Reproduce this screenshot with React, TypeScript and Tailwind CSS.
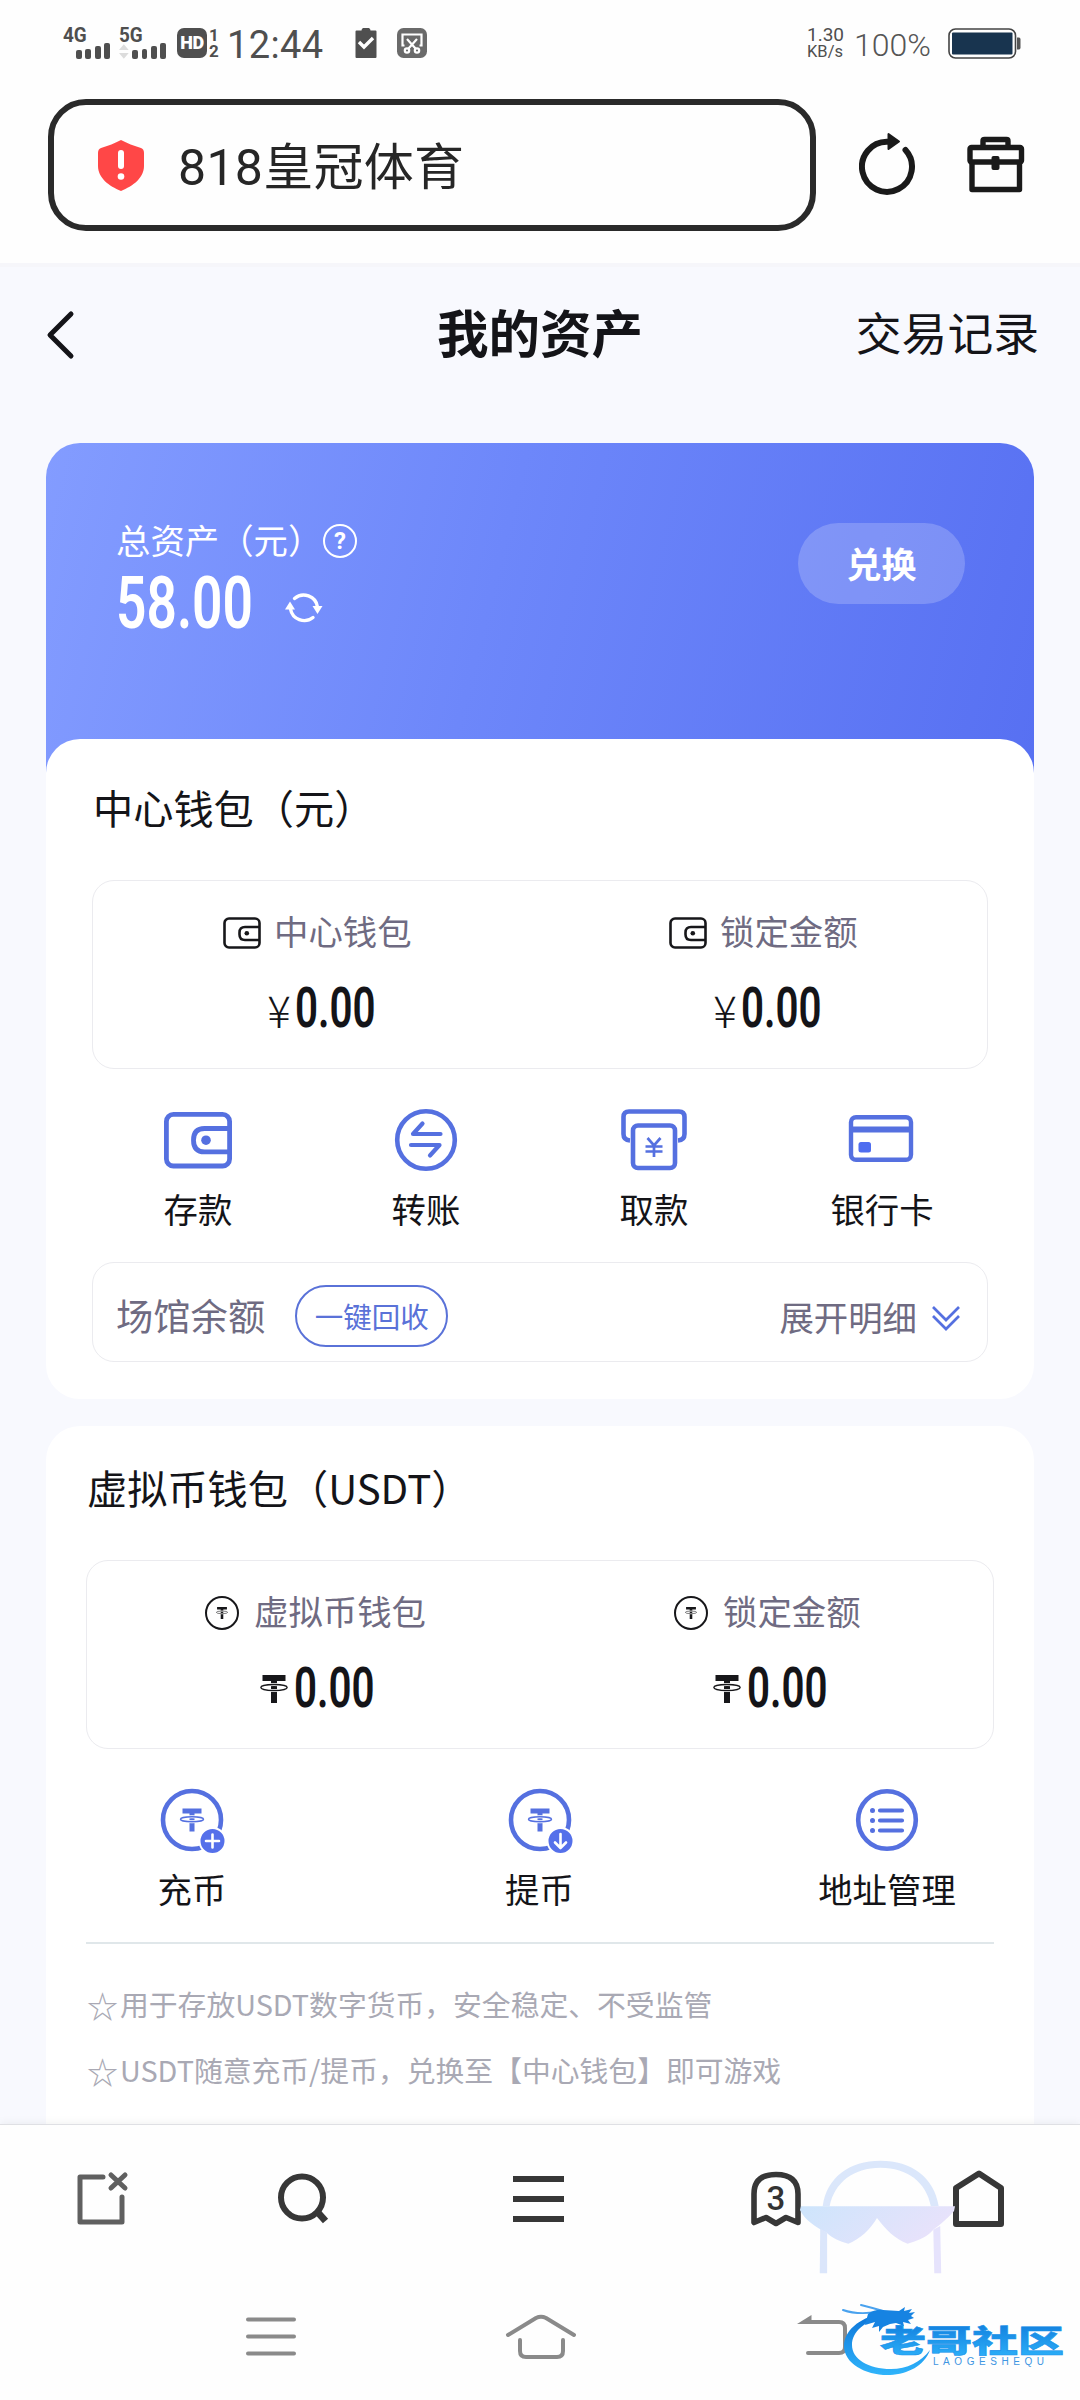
import type { ReactNode } from "react";

// ---------------------------------------------------------------------------
// Assets page — wallet overview inside a mobile browser shell.
// ---------------------------------------------------------------------------

const BLUE = "#5570e0";

function CondensedAmount({ value, size = "md" }: { value: string; size?: "md" | "lg" }) {
  if (size === "lg") {
    return (
      <span className="block h-[53px] w-[136px]">
        <span className="block origin-left scale-x-[0.73] whitespace-nowrap font-['Roboto'] text-[73px] font-semibold leading-[53px]">
          {value}
        </span>
      </span>
    );
  }
  return (
    <span className="block h-[41px] w-[78px]">
      <span className="block origin-left scale-x-[0.72] whitespace-nowrap font-['Roboto'] text-[56px] font-semibold leading-[41px]">
        {value}
      </span>
    </span>
  );
}

/* ------------------------------- status bar ------------------------------ */

function Signal({ label, arrows = false }: { label: string; arrows?: boolean }) {
  return (
    <div className="flex h-[31px] w-[47px] flex-col">
      <span className="block h-[15px] origin-left scale-x-[0.9] text-[21px] font-bold leading-[15px]">
        {label}
      </span>
      <div className="flex h-4 items-end justify-end gap-[3.5px]">
        {arrows && (
          <svg width="10" height="16" viewBox="0 0 10 16" className="mr-auto" fill="#dcdcdc">
            <path d="M5 1l5 6H0zM5 16l5-6H0z" />
          </svg>
        )}
        <i className="h-[9px] w-[6px] rounded-[2px] bg-[#4f4f4f]" />
        <i className="h-[10px] w-[6px] rounded-[2px] bg-[#4f4f4f]" />
        <i className="h-[13px] w-[6px] rounded-[2px] bg-[#4f4f4f]" />
        <i className="h-[16px] w-[6px] rounded-[2px] bg-[#4f4f4f]" />
      </div>
    </div>
  );
}

function StatusBar() {
  return (
    <div className="flex h-[86px] items-center pl-[63px] pr-[59px] font-['Roboto'] text-[#4f4f4f]">
      <Signal label="4G" />
      <div className="ml-[9px]">
        <Signal label="5G" arrows />
      </div>
      <div className="ml-[11px] flex h-[30px] w-[30px] items-center justify-center rounded-[7px] bg-[#4f4f4f]">
        <span className="text-[18px] font-black leading-none tracking-[-0.5px] text-white">HD</span>
      </div>
      <div className="ml-[2px] flex w-[10px] flex-col items-center text-[17px] font-bold leading-[16px]">
        <span>1</span>
        <span>2</span>
      </div>
      <span className="ml-[8px] w-[99px] pt-[4px] text-[38px] leading-none tracking-[0.4px]">12:44</span>
      <svg className="ml-[29px]" width="22" height="30" viewBox="0 0 22 30">
        <path d="M1.500 2.500H6.500a4.500 3 0 0 1 9 0H20.500q1 0 1 1V29q0 1-1 1H1.500q-1 0-1-1V3.500q0-1 1-1z" fill="#4f4f4f" />
        <path d="M4 14l5 5 9-9" fill="none" stroke="#fff" strokeWidth="3.400" />
      </svg>
      <svg className="ml-[20px]" width="30" height="30" viewBox="0 0 30 30">
        <rect width="30" height="30" rx="6.500" fill="#6a6a6a" />
        <g fill="none" stroke="#fff" strokeWidth="2.200">
          <path d="M7.500 17.500H5.500V6.500h19v11h-2" />
          <path d="M10 11l8.500 9.500M20 11l-8.500 9.500" />
          <circle cx="10" cy="22.500" r="2.200" />
          <circle cx="20" cy="22.500" r="2.200" />
        </g>
      </svg>
      <div className="ml-auto flex items-center">
        <div className="flex w-[38px] flex-col whitespace-nowrap text-[16.5px] leading-[17px]">
          <span className="text-[19px]">1.30</span>
          <span>KB/s</span>
        </div>
        <span className="ml-[9px] w-[82px] pt-[4px] text-[32px] font-light leading-none text-[#555]">100%</span>
        <svg className="ml-[12px]" width="73" height="31" viewBox="0 0 73 31">
          <rect x="1" y="1" width="66.500" height="29" rx="6.500" fill="#fff" stroke="#444" strokeWidth="1.600" />
          <rect x="4" y="4.500" width="60.500" height="22" rx="1" fill="#18344f" />
          <path d="M69 9.500h2q1.500 0 1.500 2v8q0 2-1.500 2h-2z" fill="#555" />
        </svg>
      </div>
    </div>
  );
}

/* ------------------------------- address bar ----------------------------- */

function AddressBar() {
  return (
    <div className="mt-[13px] flex h-[132px] items-center pl-12">
      <div className="flex h-[132px] w-[768px] items-center rounded-[38px] border-[6px] border-[#2a2a2a] pl-[43px]">
        <svg width="48" height="52" viewBox="0 0 48 52">
          <path d="M24 1C30 4 37 7 44 9Q47 10 47 14V27C47 39 36 47 24 52C12 47 1 39 1 27V14Q1 10 4 9C11 7 18 4 24 1z" fill="#ff4747" />
          <path d="M24 14v13" stroke="#fff" strokeWidth="6" strokeLinecap="round" />
          <circle cx="24" cy="37.500" r="3.300" fill="#fff" />
        </svg>
        <span className="ml-[33px] pt-[5px] font-['Roboto','Noto_Sans_CJK_SC',sans-serif] text-[50px] leading-none tracking-[0.3px] text-[#262626]">
          818皇冠体育
        </span>
      </div>
      <svg className="ml-[43px]" width="58" height="66" viewBox="0 0 58 66">
        <path d="M46.500 18A25 25 0 1 1 29 9.800" fill="none" stroke="#1a1a1a" strokeWidth="6" strokeLinecap="round" />
        <path d="M29.500 2v15l10.500-7.500z" fill="#1a1a1a" stroke="#1a1a1a" strokeWidth="2" strokeLinejoin="round" />
      </svg>
      <svg className="ml-[49px]" width="60" height="58" viewBox="0 0 60 58">
        <g fill="none" stroke="#1a1a1a" strokeWidth="5.400" strokeLinejoin="round">
          <path d="M17 11V5q0-1.500 1.500-1.500h22q1.500 0 1.500 1.500v6" />
          <rect x="4" y="11.500" width="51.500" height="14.500" rx="1.500" />
          <path d="M6 26v27.500h47.500V26" />
        </g>
        <rect x="25.500" y="20" width="8" height="14" rx="2" fill="#1a1a1a" />
      </svg>
    </div>
  );
}

/* --------------------------------- icons --------------------------------- */

function WalletIcon() {
  return (
    <svg className="mt-[2px]" width="38" height="32" viewBox="0 0 38 32" fill="none" stroke="#17171a" strokeWidth="2.600">
      <rect x="1.500" y="1.500" width="35" height="29" rx="4.500" />
      <path d="M36.500 10H22q-5.500 0-5.500 5.500v2q0 5.500 5.500 5.500h14.500" />
      <circle cx="23.800" cy="16.300" r="2.300" fill="#17171a" stroke="none" />
    </svg>
  );
}

// Tether mark: heavy T with a ring round its stem
function TetherMark({ className, color }: { className: string; color: string }) {
  return (
    <svg className={className} viewBox="0 0 28 28">
      <path d="M2.500 0h23v6H17v22h-6V6H2.500z" fill={color} />
      <ellipse cx="14" cy="12.500" rx="13.200" ry="3" fill="none" stroke="#fff" strokeWidth="3" />
      <ellipse cx="14" cy="12.500" rx="13.200" ry="3" fill="none" stroke={color} strokeWidth="1.300" />
    </svg>
  );
}

function TetherCoinIcon() {
  return (
    <div className="mt-[2px] flex h-[34px] w-[34px] items-center justify-center rounded-full border-[2.500px] border-[#17171a]">
      <TetherMark className="h-[12px] w-[14px]" color="#17171a" />
    </div>
  );
}

function DepositIcon() {
  return (
    <svg width="70" height="64" viewBox="0 0 70 64" fill="none" stroke={BLUE} strokeWidth="4.800">
      <rect x="3.400" y="6.400" width="63.200" height="51.600" rx="7" />
      <path d="M66 20.500H41.500q-11 0-11 11.700t11 11.700H66" />
      <circle cx="43" cy="32.200" r="4.800" fill={BLUE} stroke="none" />
    </svg>
  );
}

function TransferIcon() {
  return (
    <svg width="64" height="64" viewBox="0 0 64 64" fill="none" stroke={BLUE} strokeWidth="4.600">
      <circle cx="32" cy="32" r="28.800" />
      <path d="M46.500 26H19l9.500-10.500M17 37h28.500L36 47.500" strokeWidth="4.200" strokeLinecap="round" strokeLinejoin="round" />
    </svg>
  );
}

function WithdrawIcon() {
  return (
    <svg width="66" height="64" viewBox="0 0 66 64" fill="none" stroke={BLUE} strokeWidth="4.600">
      <path d="M9 32.500Q2.500 32 2.500 26V9q0-5.500 5.500-5.500h50q5.500 0 5.500 5.500v17q0 6-6.500 6.500" />
      <rect x="12" y="17.500" width="42" height="42.500" rx="5" />
      <path d="M26.500 30l6.500 7.500 6.500-7.500M24.500 38.500h17M24.500 43.500h17M33 37v12" strokeWidth="2.700" />
    </svg>
  );
}

function CardIcon() {
  return (
    <svg className="-ml-[3px]" width="66" height="64" viewBox="0 0 66 64" fill="none" stroke={BLUE} strokeWidth="4.400">
      <rect x="3" y="9.200" width="60" height="42.600" rx="5" />
      <path d="M2 21.500h62" strokeWidth="6" />
      <rect x="10.500" y="34" width="12.500" height="10.500" rx="2.500" fill="#4f6df0" stroke="none" />
    </svg>
  );
}

function CoinActionIcon({ children }: { children: ReactNode }) {
  return (
    <svg width="68" height="68" viewBox="0 0 68 68" fill="none">
      <circle cx="34" cy="34" r="29" stroke={BLUE} strokeWidth="4.600" />
      <path d="M24.500 22.500h19v5H36.500v18h-5v-18h-7z" fill={BLUE} />
      <ellipse cx="34" cy="33.200" rx="11.500" ry="2.500" stroke="#fff" strokeWidth="3" />
      <ellipse cx="34" cy="33.200" rx="11.500" ry="2.500" stroke={BLUE} strokeWidth="1.500" />
      <circle cx="54.500" cy="55" r="13" fill="#5570ea" stroke="#fff" strokeWidth="2" />
      <g stroke="#fff" strokeWidth="2.600" strokeLinecap="round" strokeLinejoin="round">
        {children}
      </g>
    </svg>
  );
}

function AddressIcon() {
  return (
    <svg width="68" height="68" viewBox="0 0 68 68" fill="none" stroke={BLUE}>
      <circle cx="34" cy="34" r="28.800" strokeWidth="4.600" />
      <path d="M27 24.500h22M27 34.500h22M27 44.500h22" strokeWidth="4.200" strokeLinecap="round" />
      <path d="M19.500 24.500h.01M19.500 34.500h.01M19.500 44.500h.01" strokeWidth="5" strokeLinecap="round" />
    </svg>
  );
}

/* --------------------------------- blocks -------------------------------- */

function AmountCell({
  icon,
  label,
  symbol,
  className,
}: {
  icon: ReactNode;
  label: string;
  symbol: ReactNode;
  className: string;
}) {
  return (
    <div className={className}>
      <div className="flex h-[52px] items-center">
        {icon}
        <span className="-mt-[3px] whitespace-nowrap text-[34.400px] leading-none text-[#6f6b82]">{label}</span>
      </div>
      <div className="mt-[24px] flex h-[52px] items-center">{symbol}</div>
    </div>
  );
}

function Yuan() {
  return (
    <>
      <span className="-ml-[2px] w-[32px] pt-[2px] text-center text-[44px] font-light leading-none">¥</span>
      <CondensedAmount value="0.00" />
    </>
  );
}

function Usdt() {
  return (
    <>
      <TetherMark className="mr-[6px] mt-[2px] h-7 w-7 shrink-0" color="#17171a" />
      <CondensedAmount value="0.00" />
    </>
  );
}

function Action({ icon, label }: { icon: ReactNode; label: string }) {
  return (
    <div className="flex w-[138px] flex-col items-center">
      <div className="flex h-[68px] items-center">{icon}</div>
      <span className="mb-[3px] mt-[14px] whitespace-nowrap text-[34.400px] leading-[40px]">{label}</span>
    </div>
  );
}

function TotalCard() {
  return (
    <section className="mx-[46px] flex h-[334px] justify-between rounded-t-[34px] bg-[linear-gradient(104deg,#839cff_0%,#6d87fa_45%,#5770f2_100%)] pl-[70px] pr-[69px] text-white">
      <div className="pt-[76px]">
        <div className="flex h-[44px] items-center">
          <span className="-mt-[3px] w-[207px] whitespace-nowrap text-[34.400px] leading-none">总资产（元）</span>
          <div className="flex h-[34px] w-[34px] items-center justify-center rounded-full border-[2.500px] border-white font-['Roboto'] text-[24px] font-bold leading-none">
            ?
          </div>
        </div>
        <div className="mt-[14px] flex items-center">
          <CondensedAmount value="58.00" size="lg" />
          <svg className="ml-[32px] mt-[8px]" width="40" height="34" viewBox="0 0 40 34">
            <g fill="none" stroke="#fff" strokeWidth="3.400">
              <path d="M10.500 7.500A14 14 0 0 1 33.500 16" strokeLinecap="round" />
              <path d="M29 26.500A14 14 0 0 1 6.500 18" strokeLinecap="round" />
            </g>
            <path d="M28.500 15h10l-5 8zM11 18.500H1L6 10.500z" fill="#fff" />
          </svg>
        </div>
      </div>
      <button className="mt-[80px] h-[81px] w-[167px] rounded-full bg-white/20 pb-[2px] text-[35px] font-bold leading-none">
        兑换
      </button>
    </section>
  );
}

function CenterWallet() {
  return (
    <section className="relative z-10 mx-[46px] -mt-[38px] h-[660px] rounded-[34px] bg-white px-[46px] pt-[45px]">
      <h2 className="h-[96px] whitespace-nowrap pl-px text-[40.200px] leading-[46px]">中心钱包（元）</h2>
      <div className="flex h-[189px] rounded-[22px] border-[1.500px] border-[#ebebef] pt-[25px]">
        <AmountCell
          className="w-[446px] pl-[130px] [&>div:first-child]:gap-[13px] [&>div:last-child]:pl-[42px]"
          icon={<WalletIcon />}
          label="中心钱包"
          symbol={<Yuan />}
        />
        <AmountCell
          className="pl-[130px] [&>div:first-child]:gap-[13px] [&>div:last-child]:pl-[42px]"
          icon={<WalletIcon />}
          label="锁定金额"
          symbol={<Yuan />}
        />
      </div>
      <div className="-mx-[8px] mt-[37px] grid grid-cols-4 justify-items-center">
        <Action icon={<DepositIcon />} label="存款" />
        <Action icon={<TransferIcon />} label="转账" />
        <Action icon={<WithdrawIcon />} label="取款" />
        <Action icon={<CardIcon />} label="银行卡" />
      </div>
      <div className="mt-[31px] flex h-[100px] items-center rounded-[22px] border-[1.500px] border-[#ebebef] pl-[23px] pr-[26px] pt-[8px] text-[#6f6b82]">
        <span className="whitespace-nowrap text-[37.300px] leading-none">场馆余额</span>
        <button className="ml-[30px] h-[62px] w-[153px] whitespace-nowrap rounded-full border-2 border-[#5a72d8] text-[28.500px] leading-none text-[#5a72d8]">
          一键回收
        </button>
        <span className="ml-auto whitespace-nowrap text-[34.400px] leading-none">展开明细</span>
        <svg className="ml-[14px] mt-[4px]" width="30" height="27" viewBox="0 0 30 27" fill="none" stroke={BLUE} strokeWidth="2.700">
          <path d="M2 2l13 13L28 2M2 11l13 13 13-13" />
        </svg>
      </div>
    </section>
  );
}

function Note({ children }: { children: ReactNode }) {
  return (
    <p className="flex h-[66px] items-center whitespace-nowrap pl-px leading-none">
      <span className="w-[33px] text-[31px]">☆</span>
      {children}
    </p>
  );
}

function UsdtWallet() {
  return (
    <section className="mx-[46px] mt-[27px] h-[760px] rounded-[34px] bg-white px-10 pt-[38px]">
      <h2 className="h-[96px] whitespace-nowrap pl-px text-[40.200px] leading-[46px]">虚拟币钱包（USDT）</h2>
      <div className="flex h-[189px] rounded-[22px] border-[1.500px] border-[#ebebef] pt-[25px]">
        <AmountCell
          className="w-[470px] pl-[118px] [&>div:first-child]:gap-[15px] [&>div:last-child]:pl-[55px]"
          icon={<TetherCoinIcon />}
          label="虚拟币钱包"
          symbol={<Usdt />}
        />
        <AmountCell
          className="pl-[117px] [&>div:first-child]:gap-[15px] [&>div:last-child]:pl-[39px]"
          icon={<TetherCoinIcon />}
          label="锁定金额"
          symbol={<Usdt />}
        />
      </div>
      <div className="mt-[37px] flex justify-between pl-[37px] pr-[38px]">
        <Action
          icon={
            <CoinActionIcon>
              <path d="M54.500 48.500v13M48 55h13" />
            </CoinActionIcon>
          }
          label="充币"
        />
        <Action
          icon={
            <CoinActionIcon>
              <path d="M54.500 48v13.500M49 56.500l5.500 5.500 5.500-5.500" />
            </CoinActionIcon>
          }
          label="提币"
        />
        <Action icon={<AddressIcon />} label="地址管理" />
      </div>
      <div className="mt-[31px] h-[2px] bg-[#e0e7ea]" />
      <div className="mt-[27px] text-[28.800px] text-[#a9a9b4]">
        <Note>用于存放USDT数字货币，安全稳定、不受监管</Note>
        <Note>USDT随意充币/提币，兑换至【中心钱包】即可游戏</Note>
      </div>
    </section>
  );
}

/* ------------------------------- bottom bars ----------------------------- */

function BrowserToolbar() {
  return (
    <div className="flex h-[148px] items-center pl-[76px] text-[#333]">
      <svg width="54" height="56" viewBox="0 0 54 56" fill="none" stroke="#606060" strokeWidth="5" strokeLinecap="round" strokeLinejoin="round">
        <path d="M27 6H4v45h42V26" />
        <path d="M35 4l14 13M49 4L35 17" />
      </svg>
      <svg className="ml-[147px]" width="54" height="54" viewBox="0 0 54 54" fill="none" stroke="#373737" strokeWidth="6">
        <circle cx="25" cy="25.500" r="21" />
        <path d="M40.500 40l8 9" strokeWidth="7" />
      </svg>
      <div className="ml-[182px] flex w-[51px] flex-col gap-[14px]">
        <i className="h-[6px] bg-[#373737]" />
        <i className="h-[6px] bg-[#373737]" />
        <i className="h-[6px] bg-[#373737]" />
      </div>
      <div className="relative ml-[185px] h-[58px] w-[54px]">
        <svg width="54" height="58" viewBox="0 0 54 58" fill="none" stroke="#373737" strokeWidth="5.600" strokeLinejoin="round">
          <path d="M5 52.500V24Q5 4.500 27 4.500T49 24v28.500l-12-5-10 6-10-6z" />
        </svg>
        <span className="absolute inset-x-0 top-[12px] text-center font-['Roboto'] text-[33px] font-medium leading-none">
          3
        </span>
      </div>
      <svg className="ml-[148px]" width="56" height="60" viewBox="0 0 56 60" fill="none" stroke="#373737" strokeWidth="6" strokeLinejoin="round">
        <path d="M5 19L28 4.500 50 19v36H5z" />
      </svg>
    </div>
  );
}

function SystemNav() {
  return (
    <div className="flex h-[128px] items-center pl-[245px]">
      <svg width="52" height="44" viewBox="0 0 52 44" stroke="#8a8a8a" strokeWidth="4" strokeLinecap="round">
        <path d="M3 4.500h46M3 21.500h46M3 38.500h46" />
      </svg>
      <svg className="ml-[208px]" width="72" height="46" viewBox="0 0 72 46" fill="none" stroke="#8a8a8a" strokeWidth="4" strokeLinecap="round" strokeLinejoin="round">
        <path d="M3 21L31 4q5-2.500 10 0l28 17" />
        <path d="M15 26V37q0 6 6 6h31q6 0 6-6V26" />
      </svg>
      <svg className="ml-[220px]" width="52" height="44" viewBox="0 0 52 44">
        <path d="M13 7h29q6 0 6 6v19q0 6-6 6H11" fill="none" stroke="#8a8a8a" strokeWidth="4" strokeLinecap="round" />
        <path d="M0 9L14.500 0v9z" fill="#8a8a8a" />
      </svg>
    </div>
  );
}

function IncognitoMark() {
  return (
    <svg className="absolute left-[799px] top-[33px]" width="158" height="118" viewBox="0 0 160 118">
      <defs>
        <linearGradient id="incognito" x1="0" y1="0" x2="1" y2="0.300">
          <stop offset="0" stopColor="#cde5fc" />
          <stop offset="1" stopColor="#e8e2fb" />
        </linearGradient>
      </defs>
      <path d="M24 48C28 19 51 2 82.500 2S137 19 141.500 48h-8C129 24 110 9 82.500 9S36 24 31 48z" fill="#dbe7fb" />
      <path d="M2 48h156l-1 5c-7 8-13 13-21 19l-3 3c-5 5-15 9-23 11-13-5-22-14-31-26-7 12-17 21-29 26-9-2-17-6-22-11C16 69 6 62 1 52z" fill="url(#incognito)" />
      <path d="M21.500 71l7 4v41h-7.500z" fill="#dbe6fb" />
      <path d="M136 72l7-4 1 48h-7z" fill="#e6e3fc" />
    </svg>
  );
}

function CommunityLogo() {
  return (
    <svg className="absolute left-[840px] top-[172px]" width="228" height="84" viewBox="0 0 228 84">
      <defs>
        <linearGradient id="dragon" x1="0" y1="0" x2="0" y2="1">
          <stop offset="0" stopColor="#0c74d8" />
          <stop offset="1" stopColor="#2fb4fb" />
        </linearGradient>
      </defs>
      {/* body curling up into the dragon head */}
      <path
        d="M40 17C19 21 4 34 4 49c0 18 23 30 46 29 18-1 34-9 40-25-9 12-23 19-39 19-23 0-39-10-39-24 0-14 13-23 31-29z"
        fill="url(#dragon)"
      />
      {/* whiskers */}
      <path d="M3 13q14 5 34 2M21 8q12 3 22 6" fill="none" stroke="#4aa2ee" strokeWidth="2" strokeLinecap="round" />
      {/* head and mane */}
      <path
        d="M28 17q7-5 15-4l16 1 6-4-1 4 8-2-3 4 6-1-4 4 3 2-6 2 3 4-8-2 1 4-8-3-6 1-7 3-4 5v-6l-7 2 3-6-10 3z"
        fill="#1683e2"
      />
      <g fontFamily="'Noto Sans CJK SC', sans-serif" fontWeight="900">
        <text x="40" y="54.500" fontSize="31" textLength="184" lengthAdjust="spacingAndGlyphs" fill="url(#dragon)" stroke="#1a93ea" strokeWidth="0.600">
          老哥社区
        </text>
      </g>
      <text x="93" y="68" fontSize="10" fontFamily="'Liberation Sans', sans-serif" textLength="111" fill="#3f96e2">
        LAOGESHEQU
      </text>
    </svg>
  );
}

export default function App() {
  return (
    <div className="flex h-[2400px] w-[1080px] flex-col overflow-hidden bg-[#fefefe] font-['Noto_Sans_CJK_SC',sans-serif] text-[#141418]">
      <header className="h-[263px] shrink-0">
        <StatusBar />
        <AddressBar />
      </header>

      <main className="h-[1861px] shrink-0 overflow-hidden border-t-4 border-[#f6f6fa] bg-[#f8f9fe]">
        <div className="grid h-[176px] grid-cols-3 items-start pl-[46px] pr-[41px]">
          <svg className="mt-[43px]" width="30" height="50" viewBox="0 0 30 50" fill="none" stroke="#141418" strokeWidth="5" strokeLinecap="round" strokeLinejoin="round">
            <path d="M25 4L4 25l21 21" />
          </svg>
          <h1 className="-ml-[5px] mt-[34px] whitespace-nowrap text-center text-[51.500px] font-bold leading-[60px]">我的资产</h1>
          <span className="mt-[35px] whitespace-nowrap text-right text-[45.800px] leading-[58px]">交易记录</span>
        </div>
        <TotalCard />
        <CenterWallet />
        <UsdtWallet />
      </main>

      <footer className="relative h-[276px] shrink-0 border-t border-[#dfe0e4] bg-[#fefefe] shadow-[0_-2px_8px_rgba(0,0,0,0.050)]">
        <BrowserToolbar />
        <SystemNav />
        <IncognitoMark />
        <CommunityLogo />
      </footer>
    </div>
  );
}
